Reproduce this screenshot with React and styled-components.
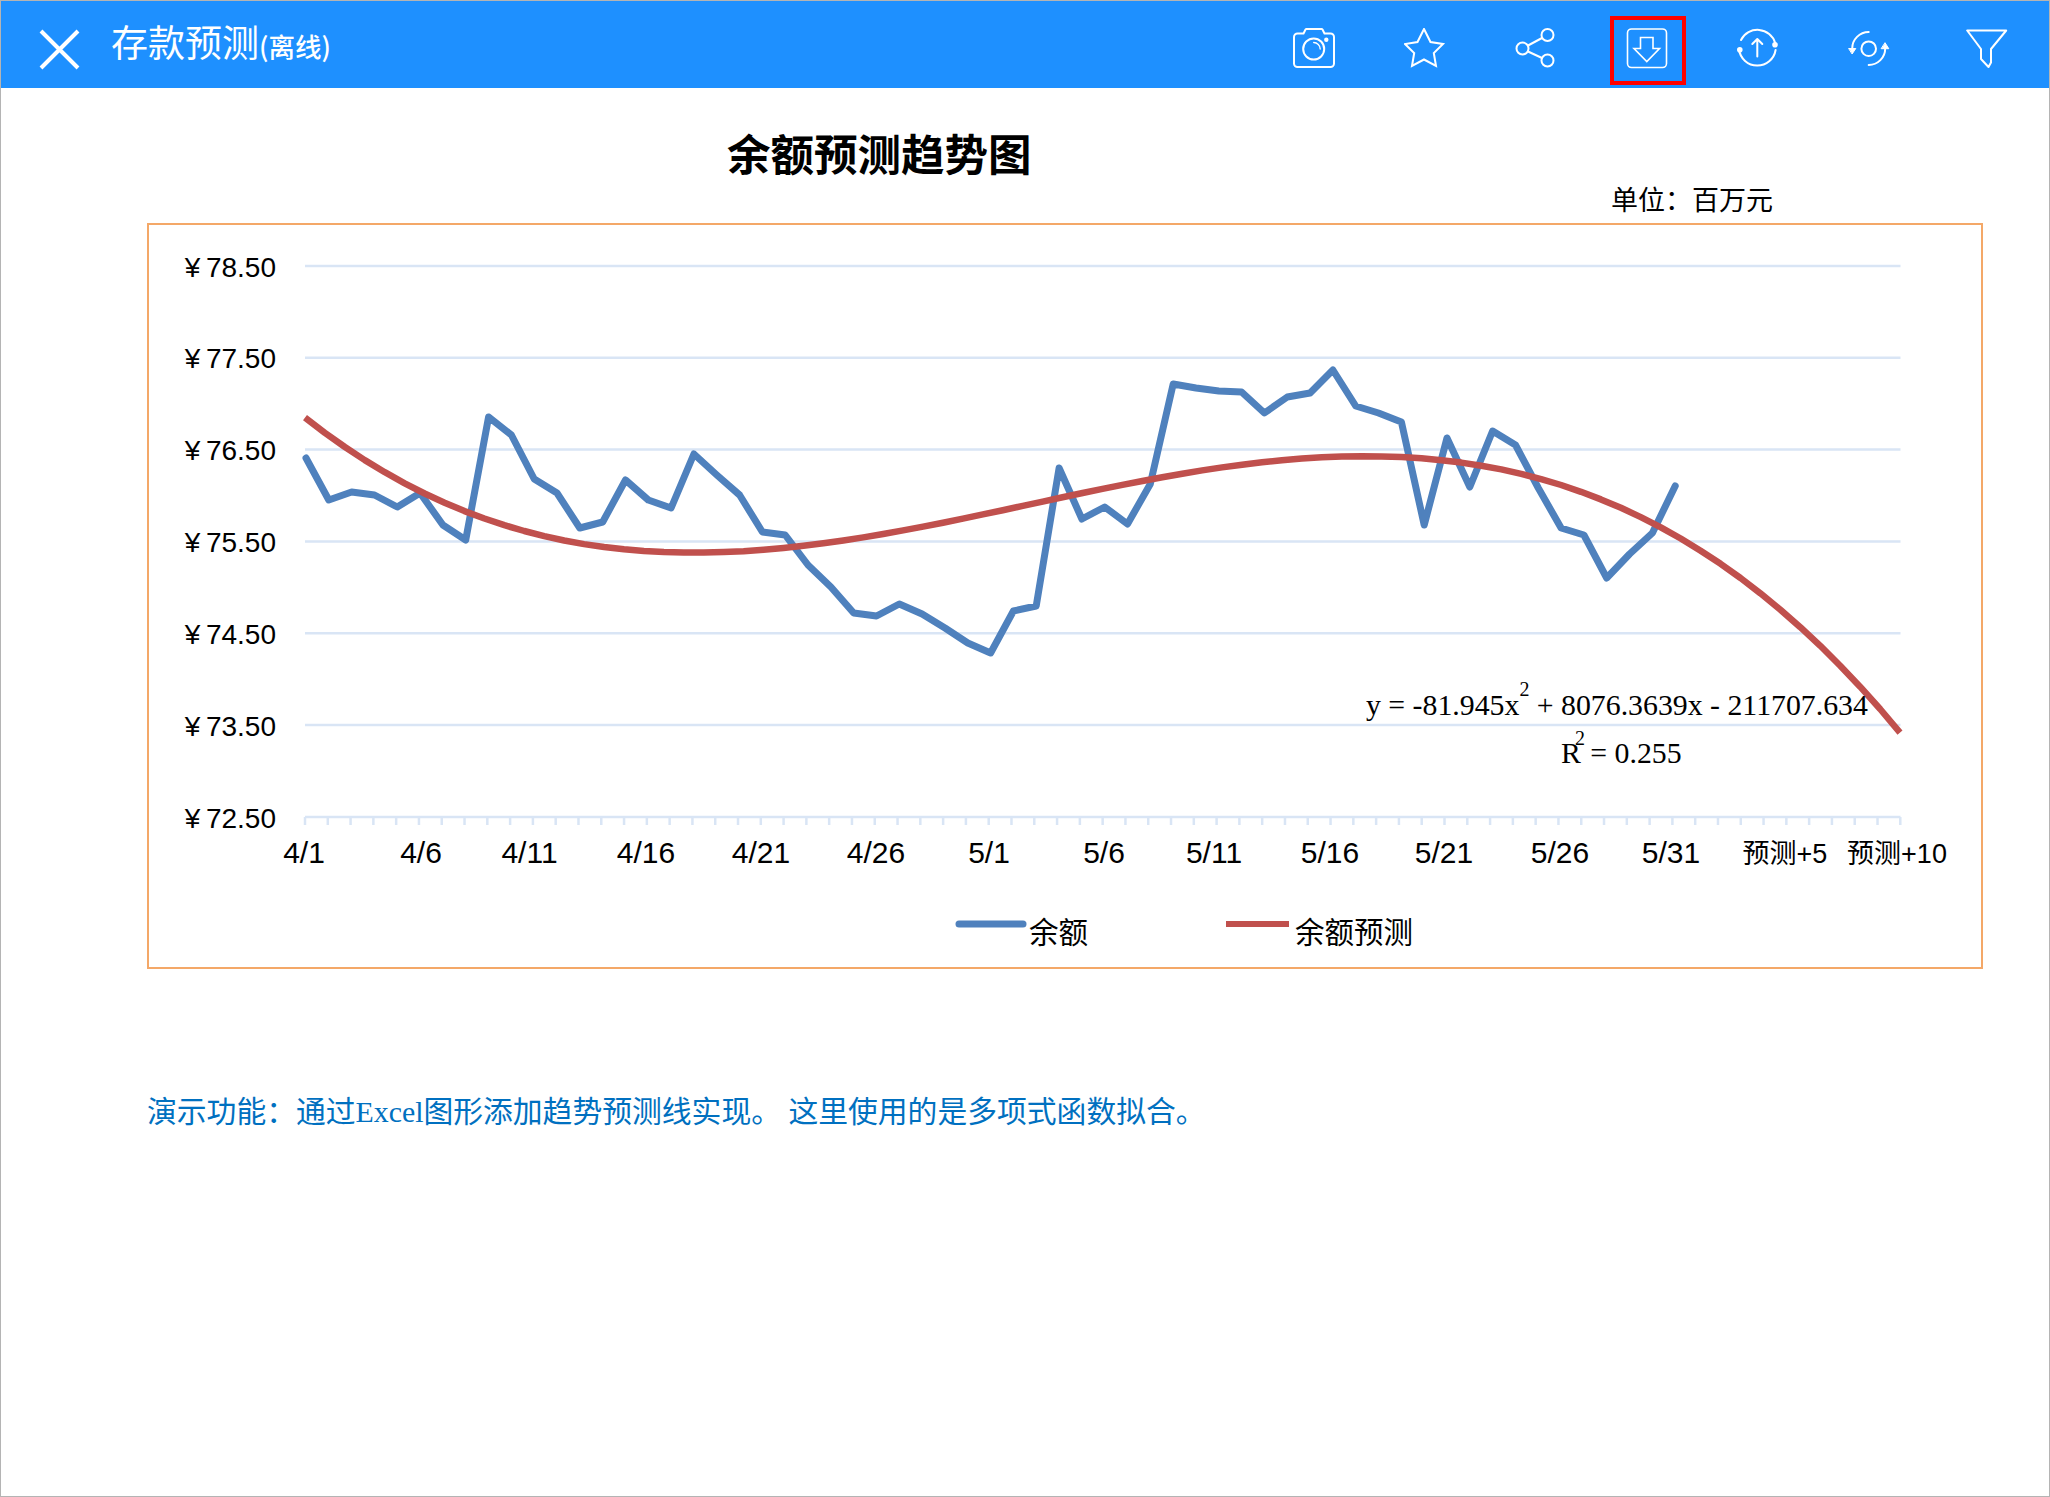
import React from 'react'
import styled, { createGlobalStyle } from 'styled-components'

const GlobalStyle = createGlobalStyle`
  html, body { margin: 0; padding: 0; background: #fff; }
  body { font-family: "Noto Sans CJK SC", "Liberation Sans", sans-serif; }
`

const Page = styled.div`
  width: 2050px;
  height: 1497px;
  box-sizing: border-box;
  border: 1px solid #b4b4b4;
  background: #fff;
`

const TopBar = styled.header`
  height: 87px;
  background: #1e90ff;
  display: flex;
  color: #fff;
`

const CloseButton = styled.button`
  width: 110px;
  padding: 28px 0 0 38px;
  border: none;
  background: none;
  display: flex;
  align-items: flex-start;
  svg { display: block; }
`

const BarTitle = styled.h1`
  margin: 0;
  padding-top: 14px;
  flex: 1;
  font-size: 37px;
  line-height: 52px;
  font-weight: 400;
  span { font-size: 26.5px; font-weight: 500; }
`

const Toolbar = styled.div`
  display: flex;
  gap: 35px;
  padding: 15px 23px 0 0;
`

const IconButton = styled.button`
  width: 76px;
  height: 69px;
  box-sizing: border-box;
  margin-left: ${p => (p.$last ? '7px' : '0')};
  padding: 8px 2px 0 0;
  border: 4px solid ${p => (p.$active ? '#f00' : 'transparent')};
  background: none;
  display: flex;
  justify-content: center;
  align-items: flex-start;
  svg {
    display: block;
    width: 42px;
    height: 42px;
    fill: none;
    stroke: #fff;
    stroke-width: 2;
    stroke-linejoin: round;
    stroke-linecap: round;
  }
`

const Main = styled.main`
  padding: 0 66px 0 146px;
`

const ChartTitle = styled.h2`
  margin: 0;
  padding: 35px 0 0 580px;
  font-size: 43.5px;
  line-height: 60px;
  font-weight: 700;
  color: #000;
`

const Unit = styled.div`
  margin-bottom: 8px;
  padding-left: 1464px;
  font-size: 27px;
  line-height: 32px;
  color: #000;
`

const ChartBox = styled.section`
  height: 746px;
  box-sizing: border-box;
  border: 2px solid #f4a868;
  svg { display: block; }
`

const Note = styled.p`
  margin: 0;
  padding-top: 121px;
  font-family: "Liberation Serif", "Noto Sans CJK SC", serif;
  font-size: 29.8px;
  line-height: 44px;
  color: #0070c0;
`

const AxisText = styled.text`
  font-family: "Liberation Sans", "Noto Sans CJK SC", sans-serif;
  font-size: ${p => p.$size || 28}px;
  fill: #000;
`

const Equation = styled.text`
  font-family: "Liberation Serif", serif;
  font-size: 29.8px;
  fill: #000;
`

const Grid = styled.line`
  stroke: #d9e5f5;
  stroke-width: 2.5;
`

const Series = styled.path`
  fill: none;
  stroke: ${p => p.$color};
  stroke-width: ${p => p.$width};
  stroke-linejoin: round;
  stroke-linecap: ${p => p.$cap};
`

const balance = [
  458, 500, 492, 495, 507, 493, 525, 540, 417, 435, 479, 493, 528, 522, 480, 500, 508, 454, 475, 495,
  532, 535, 565, 587, 613, 616, 604, 614, 628, 643, 653, 611, 606, 468, 519, 507, 524, 484, 384, 388,
  391, 392, 413, 397, 393, 370, 406, 413, 422, 525, 438, 487, 431, 445, 488, 528, 535, 578, 554, 533, 486,
]

const gridY = [266, 357.8, 449.6, 541.4, 633.2, 725, 817]
const yLabels = ['78.50', '77.50', '76.50', '75.50', '74.50', '73.50', '72.50']
const xLabels = [
  [304, '4/1'], [421, '4/6'], [529.5, '4/11'], [646, '4/16'], [761, '4/21'], [876, '4/26'], [989, '5/1'],
  [1104, '5/6'], [1214, '5/11'], [1330, '5/16'], [1444, '5/21'], [1560, '5/26'], [1671, '5/31'],
]
const forecastLabels = [[1785, '预测+5'], [1897, '预测+10']]

const X0 = 305
const STEP = 22.79

const balancePath = balance.map((y, i) => `${i ? 'L' : 'M'}${(X0 + 1 + i * 22.82).toFixed(1)} ${y}`).join('')

// polynomial trend line, turning points read from the chart
const trendY = x => {
  const u = x - 694
  const tail = Math.max(0, x - 1364)
  return 552.7 + 1.92e-6 * (u * u * u / 3 - 670.6 * u * u / 2) - 2.2e-5 * tail * tail
}
const trendPath = Array.from({ length: 81 }, (_, i) => {
  const x = X0 + (i * 1595) / 80
  return `${i ? 'L' : 'M'}${x.toFixed(1)} ${trendY(x).toFixed(1)}`
}).join('')

const TrendChart = () => (
  <svg width="1832" height="742" viewBox="149 225 1832 742">
    {gridY.map(y => <Grid key={y} x1={X0} x2={1900.5} y1={y} y2={y} />)}
    {Array.from({ length: 71 }, (_, i) => (
      <Grid key={i} x1={X0 + i * STEP} x2={X0 + i * STEP} y1={817} y2={825} />
    ))}
    {yLabels.map((t, i) => (
      <AxisText key={t} x={276} y={gridY[i] + 10.5} textAnchor="end">¥{'\u2009'}{t}</AxisText>
    ))}
    {xLabels.map(([x, t]) => (
      <AxisText key={t} x={x} y={863} $size={30} textAnchor="middle">{t}</AxisText>
    ))}
    {forecastLabels.map(([x, t]) => (
      <AxisText key={t} x={x} y={863} $size={27} textAnchor="middle">{t}</AxisText>
    ))}
    <Series d={balancePath} $color="#4f81bd" $width={7} $cap="round" />
    <Series d={trendPath} $color="#c0504d" $width={6.5} $cap="butt" />

    <Equation x={1366} y={715}>
      y = -81.945x<tspan fontSize="20" dy="-19">2</tspan><tspan dy="19"> + 8076.3639x - 211707.634</tspan>
    </Equation>
    <Equation x={1561} y={763}>
      R<tspan fontSize="20" dx="-6" dy="-18">2</tspan><tspan dx="-2" dy="18"> = 0.255</tspan>
    </Equation>

    <Series d="M959 924H1023" $color="#4f81bd" $width={7} $cap="round" />
    <AxisText x={1029} y={943} $size={29.5}>余额</AxisText>
    <Series d="M1226 924H1289" $color="#c0504d" $width={6} $cap="butt" />
    <AxisText x={1295} y={943} $size={29.5}>余额预测</AxisText>
  </svg>
)

const App = () => (
  <Page>
    <GlobalStyle />
    <TopBar>
      <CloseButton>
        <svg width="41" height="41" viewBox="0 0 41 41" fill="none" stroke="#fff" strokeWidth="4">
          <path d="M2 2L39 39M39 2L2 39" />
        </svg>
      </CloseButton>
      <BarTitle>存款预测<span>(离线)</span></BarTitle>
      <Toolbar>
        <IconButton>
          <svg viewBox="0 0 42 42">
            <path d="M4.5 5.5H10.5L12.5 1.5Q12.8 1 13.5 1H28.5Q29.2 1 29.5 1.5L31.5 5.5H37.5A3.5 3.5 0 0 1 41 9V35.5A3.5 3.5 0 0 1 37.5 39H4.5A3.5 3.5 0 0 1 1 35.5V9A3.5 3.5 0 0 1 4.5 5.5Z" />
            <circle cx="20.7" cy="21" r="10.5" />
            <path d="M20.7 14.5A6.5 6.5 0 0 1 27.2 21" strokeWidth="1.4" />
            <circle cx="33.3" cy="11.7" r="1.2" fill="#fff" />
          </svg>
        </IconButton>
        <IconButton>
          <svg viewBox="0 0 42 42">
            <path d="M20 1L26.5 14L39 16L29.8 25L32 38L20 31.5L8 38L10.2 25L1 16L13.5 14Z" strokeLinejoin="miter" />
          </svg>
        </IconButton>
        <IconButton>
          <svg viewBox="0 0 42 42">
            <circle cx="32.5" cy="7" r="6" />
            <circle cx="7.5" cy="20.5" r="6" />
            <circle cx="32.5" cy="32.5" r="6" />
            <path d="M13 17.5L27 10M13 23.5L27 30" />
          </svg>
        </IconButton>
        <IconButton $active>
          <svg viewBox="0 0 42 42">
            <rect x="1.5" y="1" width="39" height="38.5" rx="4" strokeWidth="1.6" />
            <path d="M14.5 9.5H27V20.5H33.5L20.8 33.5L8 20.5H14.5Z" strokeWidth="1.6" strokeLinejoin="miter" />
          </svg>
        </IconButton>
        <IconButton>
          <svg viewBox="0 0 42 42">
            <path d="M38.2 15A18.5 18.5 0 0 0 4 12" />
            <path d="M2 21.5A18.5 18.5 0 0 0 38.6 22" />
            <circle cx="38" cy="16.7" r="1.8" fill="#fff" />
            <circle cx="2.8" cy="21.7" r="1.8" fill="#fff" />
            <path d="M20.3 28.5V11M15.3 16L20.3 11L25.3 16" />
          </svg>
        </IconButton>
        <IconButton>
          <svg viewBox="0 0 42 42">
            <circle cx="20.7" cy="20.7" r="7.3" />
            <path d="M20.7 4A16.5 16.5 0 0 0 4.2 20.5M20.7 37A16.5 16.5 0 0 0 37.2 20.5" />
            <path d="M1 20.5H7.8L4.3 25.7ZM33.5 20.7H40.8L37.2 15Z" fill="#fff" strokeWidth="1" />
          </svg>
        </IconButton>
        <IconButton $last>
          <svg viewBox="0 0 42 42">
            <path d="M1.2 2.5H40.2L25 21V34.5L22.5 39L15 31V21Z" />
          </svg>
        </IconButton>
      </Toolbar>
    </TopBar>
    <Main>
      <ChartTitle>余额预测趋势图</ChartTitle>
      <Unit>单位：百万元</Unit>
      <ChartBox>
        <TrendChart />
      </ChartBox>
      <Note>演示功能：通过Excel图形添加趋势预测线实现。 这里使用的是多项式函数拟合。</Note>
    </Main>
  </Page>
)

export default App
